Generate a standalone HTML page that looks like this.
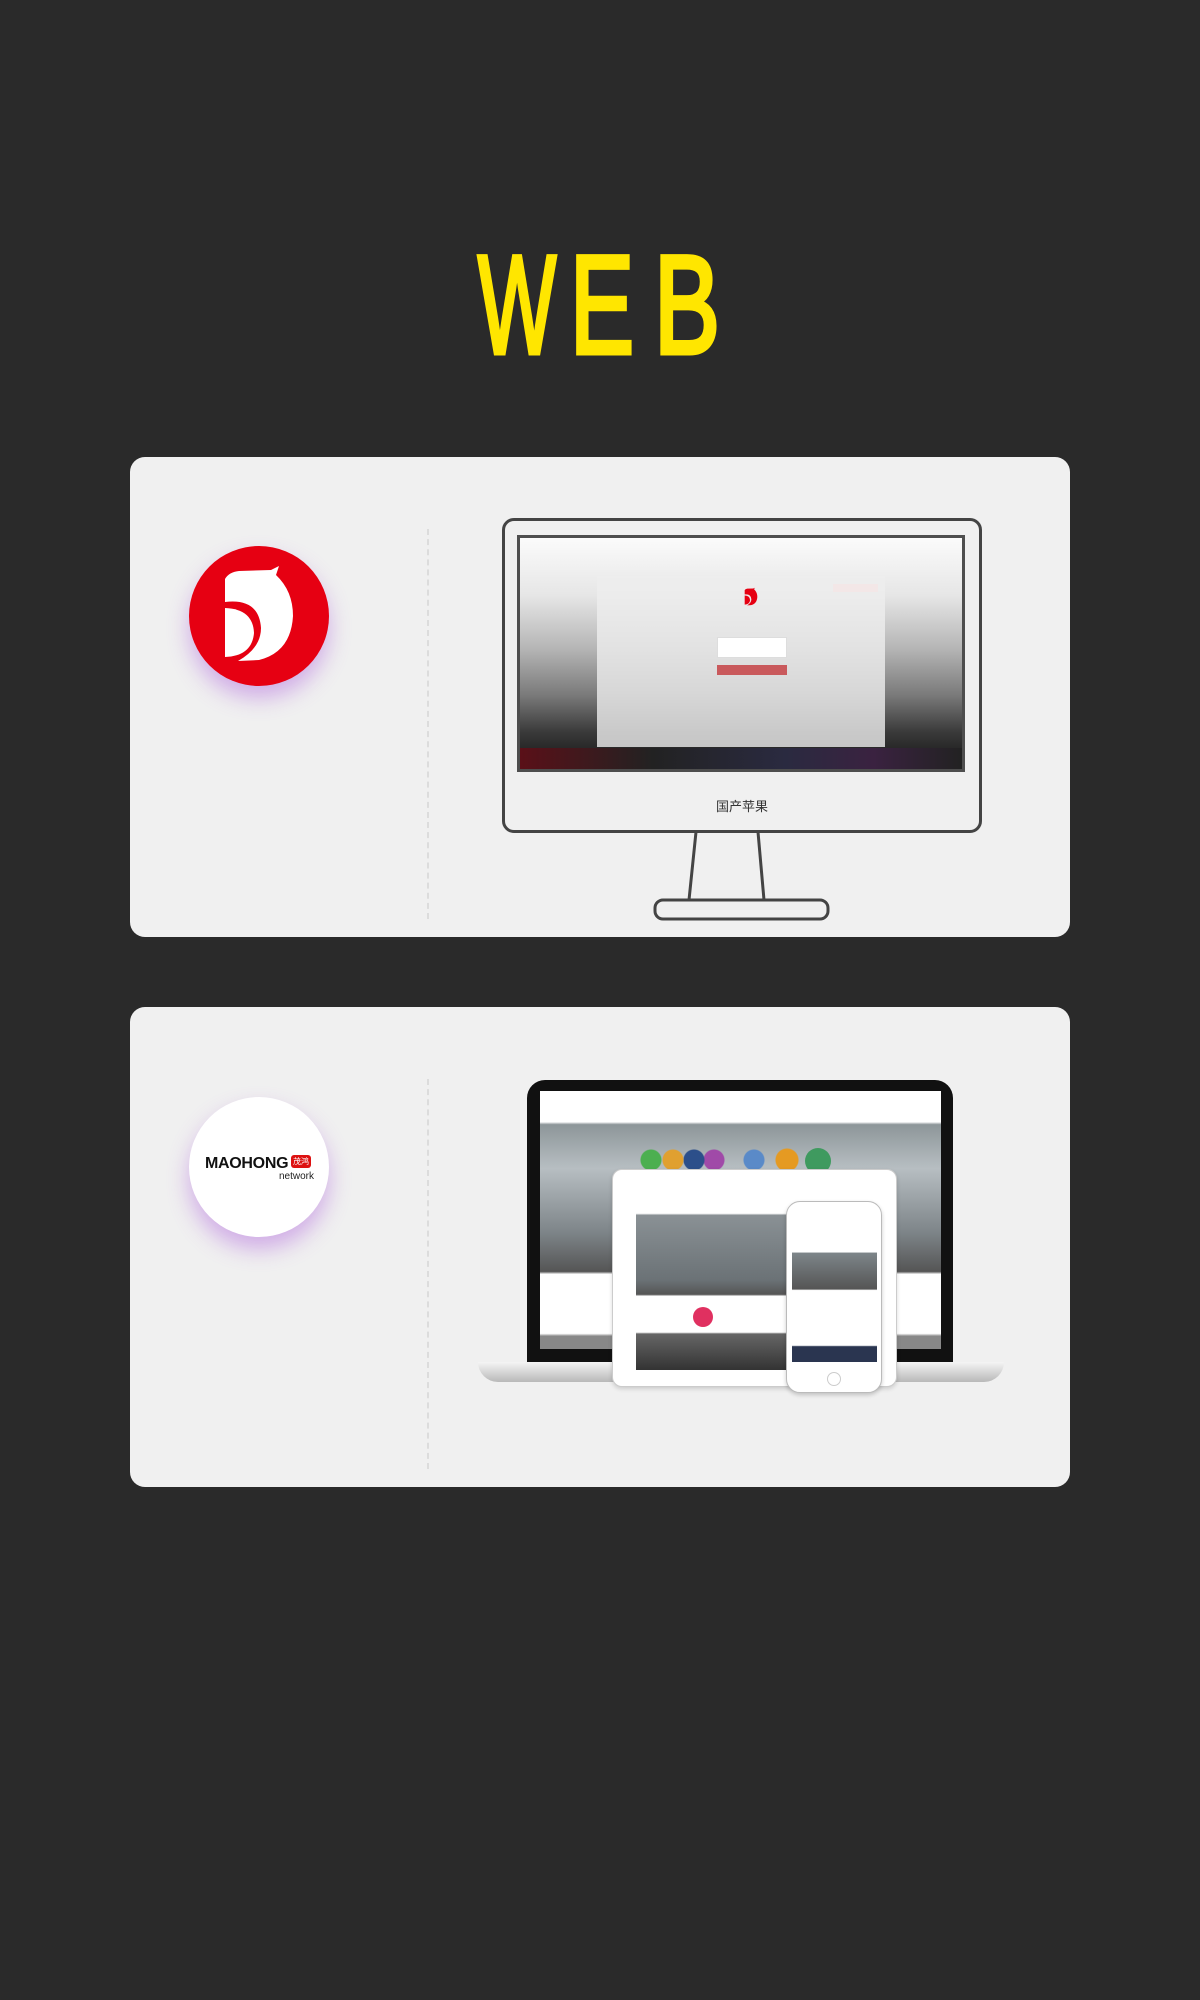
<!DOCTYPE html>
<html><head><meta charset="utf-8"><style>
*{margin:0;padding:0;box-sizing:border-box}
body{width:1200px;height:2000px;background:#2a2a2a;position:relative;overflow:hidden;font-family:"Liberation Sans","Noto Sans CJK SC",sans-serif}
.a{position:absolute}
.card{position:absolute;left:130px;width:940px;height:480px;background:#f0f0f0;border-radius:15px}
.dash{position:absolute;left:297px;top:72px;height:390px;border-left:2px dashed #dcdcdc}
</style></head><body>
<svg class="a" style="left:0;top:0" width="1200" height="400" font-family="Liberation Sans, sans-serif" font-size="140" fill="#ffe600" stroke="#ffe600" stroke-width="5"><text x="478" y="353" textLength="78" lengthAdjust="spacingAndGlyphs">W</text><text x="570" y="353" textLength="64" lengthAdjust="spacingAndGlyphs">E</text><text x="654" y="353" textLength="66" lengthAdjust="spacingAndGlyphs">B</text></svg>

<div class="card" style="top:457px">
  <div class="dash"></div>
  <div class="a" style="left:59px;top:89px;width:140px;height:140px;border-radius:50%;background:#e60012;box-shadow:0 12px 22px rgba(170,90,220,.45)">
    <svg width="140" height="140" viewBox="0 0 140 140"><path d="M36 33 Q40 26 50 25 L82 24 L90 20 L87 29 Q104 45 104 70 Q102 106 70 114 L49 115 Q72 102 72 82 Q70 52 36 56 Z" fill="#fff"/><path d="M36 62 Q64 63 65 87 Q63 110 36 111 Z" fill="#fff"/></svg>
  </div>
  <!-- monitor -->
  <div class="a" style="left:372px;top:61px;width:480px;height:315px;border:3px solid #444;border-radius:12px;background:#f0f0f0"></div>
  <div class="a" style="left:387px;top:78px;width:448px;height:237px;border:3px solid #4e4e4e;background:linear-gradient(#fbfbfb 0%,#e6e6e6 25%,#b5b5b5 48%,#7a7a7a 68%,#3a3a3a 84%,#111 100%)"></div>
  <div class="a" style="left:390px;top:291px;width:442px;height:21px;background:linear-gradient(90deg,#5a1018,#222 30%,#2a2a40 60%,#3a2240 80%,#222)"></div>
  <div class="a" style="left:467px;top:119px;width:288px;height:171px;background:rgba(238,238,238,.8)">
    <svg class="a" style="left:141px;top:7px" width="26" height="28" viewBox="0 0 140 140"><path d="M36 33 Q40 26 50 25 L82 24 L90 20 L87 29 Q104 45 104 70 Q102 106 70 114 L49 115 Q72 102 72 82 Q70 52 36 56 Z" fill="#e60012"/><path d="M36 62 Q64 63 65 87 Q63 110 36 111 Z" fill="#e60012"/></svg>
    <div class="a" style="left:120px;top:61px;width:70px;height:21px;background:#fff;border:1px solid #ddd"></div>
    <div class="a" style="left:120px;top:89px;width:70px;height:10px;background:#c9595c"></div>
    <div class="a" style="left:236px;top:8px;width:45px;height:8px;background:#f3e7e7"></div>
  </div>
  <div class="a" style="left:586px;top:339px;font-size:13px;color:#333">国产苹果</div>
  <svg class="a" style="left:520px;top:375px" width="190" height="90"><path d="M46 0 L39 68 M108 0 L114 68" stroke="#444" stroke-width="3" fill="none"/><rect x="5" y="68" width="173" height="19" rx="8" fill="none" stroke="#444" stroke-width="3"/></svg>
</div>

<div class="card" style="top:1007px">
  <div class="dash"></div>
  <div class="a" style="left:59px;top:90px;width:140px;height:140px;border-radius:50%;background:#fff;box-shadow:0 12px 22px rgba(170,90,220,.45)">
    <div class="a" style="left:16px;top:58px;font-size:16px;font-weight:bold;color:#111;letter-spacing:-.3px">MAOHONG</div>
    <div class="a" style="left:102px;top:58px;width:20px;height:13px;background:#d11;border-radius:3px;color:#fff;font-size:8px;line-height:13px;text-align:center">茂鸿</div>
    <div class="a" style="left:90px;top:74px;font-size:10px;color:#222">network</div>
  </div>
  <!-- laptop -->
  <div class="a" style="left:397px;top:73px;width:426px;height:285px;background:#111;border-radius:18px 18px 0 0"></div>
  <div class="a" style="left:410px;top:84px;width:401px;height:258px;background:linear-gradient(#fff 0,#fff 12%,#8d9699 13%,#b7bec2 30%,#7d8488 55%,#555 70%,#fff 71%,#fff 94%,#888 95%)"></div>
  <div class="a" style="left:348px;top:355px;width:526px;height:20px;background:linear-gradient(#f4f4f4,#b8b8b8);border-radius:0 0 40px 40px"></div>
  <div class="a" style="left:509px;top:140px;width:165px;height:26px;background:radial-gradient(circle at 12px 13px,#4caf50 10px,transparent 11px),radial-gradient(circle at 34px 13px,#e0a030 10px,transparent 11px),radial-gradient(circle at 55px 13px,#2c4f8a 10px,transparent 11px),radial-gradient(circle at 75px 13px,#a04aa8 10px,transparent 11px),radial-gradient(circle at 115px 13px,#5a8ac8 10px,transparent 11px),radial-gradient(circle at 148px 13px,#e59a22 11px,transparent 12px)"></div>
  <div class="a" style="left:675px;top:141px;width:26px;height:26px;border-radius:50%;background:#3f9a5f"></div>
  <!-- tablet -->
  <div class="a" style="left:482px;top:162px;width:285px;height:218px;background:#fff;border-radius:10px;border:1px solid #ccc;box-shadow:0 2px 4px rgba(0,0,0,.15)"></div>
  <div class="a" style="left:506px;top:183px;width:236px;height:180px;background:linear-gradient(#fff 0,#fff 13%,#8a9195 14%,#6b7276 50%,#555 58%,#fff 59%,#fff 79%,#666 80%,#333)"></div>
  <div class="a" style="left:563px;top:300px;width:20px;height:20px;border-radius:50%;background:#e03060"></div>
  <!-- phone -->
  <div class="a" style="left:656px;top:194px;width:96px;height:192px;background:#fff;border-radius:14px;border:1px solid #bbb;box-shadow:0 2px 4px rgba(0,0,0,.2)"></div>
  <div class="a" style="left:662px;top:227px;width:85px;height:128px;background:linear-gradient(#fff 0,#fff 14%,#7d8589 15%,#555 43%,#fff 44%,#fff 87%,#2a3550 88%)"></div>
  <div class="a" style="left:697px;top:365px;width:14px;height:14px;border-radius:50%;border:1px solid #ccc"></div>
</div>
</body></html>
